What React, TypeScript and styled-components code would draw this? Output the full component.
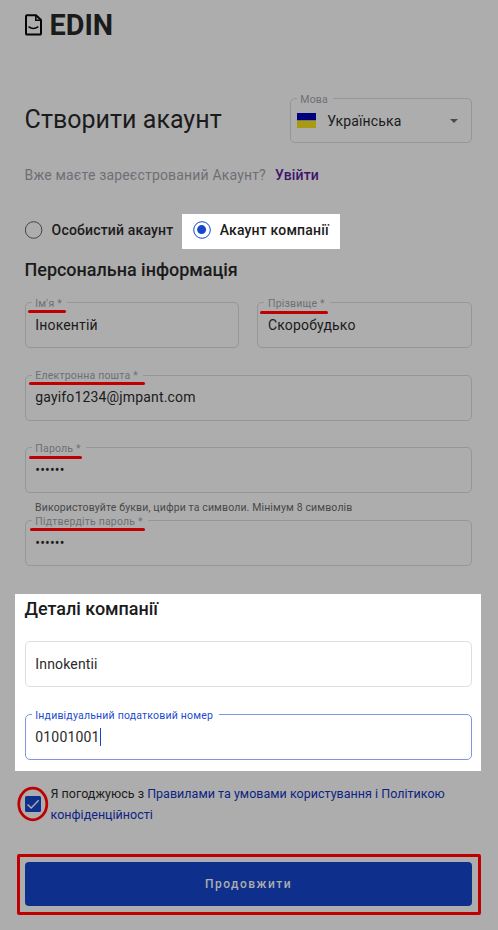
import React from 'react';
import styled, { createGlobalStyle } from 'styled-components';

const shade = '#adadad';
const red = '#c00000';

const GlobalStyle = createGlobalStyle`
  *, *::before, *::after { box-sizing: border-box; }
  body {
    margin: 0;
    background: ${shade};
    color: #1b1b1b;
    font-family: Roboto, "Liberation Sans", sans-serif;
    font-size: 14px;
  }
`;

const Page = styled.main`
  width: 498px;
  height: 930px;
  padding: 0 26px 0 25px;
  overflow: hidden;
  display: flex;
  flex-direction: column;
  background: ${shade};
`;

const Brand = styled.header`
  display: flex;
  align-items: center;
  gap: 7.5px;
  height: 50px;
  flex: none;
  svg { display: block; }
`;

const BrandName = styled.span`
  font-size: 28.8px;
  font-weight: 700;
  line-height: 50px;
`;

const TitleRow = styled.div`
  display: flex;
  justify-content: space-between;
  margin-top: 48px;
  height: 45px;
  flex: none;
`;

const Title = styled.h1`
  margin: 0 0 0 -0.4px;
  font-size: 25px;
  font-weight: 400;
  line-height: 44px;
  letter-spacing: 0.02px;
  white-space: nowrap;
`;

const Prompt = styled.p`
  margin: 22px 0 0 -0.4px;
  height: 20px;
  line-height: 20px;
  letter-spacing: 0.17px;
  color: #6c7075;
  white-space: nowrap;
  flex: none;
`;

const SignIn = styled.a`
  margin-left: 9px;
  color: #3e1269;
  font-weight: 500;
`;

const Radios = styled.div`
  display: flex;
  margin-top: 29px;
  height: 35px;
  flex: none;
`;

const RadioOption = styled.label<{ $active?: boolean }>`
  display: flex;
  align-items: center;
  gap: ${p => (p.$active ? 7.7 : 8.6)}px;
  width: ${p => (p.$active ? 158 : 157)}px;
  padding: 0 0 3px ${p => (p.$active ? 11 : 0)}px;
  background: ${p => (p.$active ? '#fff' : 'transparent')};
  font-weight: 500;
  letter-spacing: 0.18px;
  white-space: nowrap;
  svg { flex: none; display: block; }
`;

const SectionTitle = styled.h2<{ $top: number }>`
  margin: ${p => p.$top}px 0 0 -0.5px;
  height: 24px;
  font-size: 18px;
  font-weight: 500;
  line-height: 24px;
  letter-spacing: -0.02px;
  flex: none;
  white-space: nowrap;
`;

const Split = styled.div`
  display: grid;
  grid-template-columns: 214px 215px;
  column-gap: 18px;
  margin-top: 20px;
  flex: none;
`;

const Box = styled.div<{ $top?: number; $focus?: boolean; $light?: boolean; $inset?: number; $lift?: number }>`
  position: relative;
  display: flex;
  align-items: center;
  height: 46px;
  flex: none;
  margin-top: ${p => p.$top ?? 0}px;
  padding: 0 9px ${p => p.$lift ?? 0}px ${p => p.$inset ?? 9.3}px;
  border: 1px solid ${p => (p.$focus ? '#7b98dd' : p.$light ? '#dedede' : '#969696')};
  border-radius: 5px;
`;

const SelectBox = styled(Box)`
  width: 182px;
  height: 45px;
  padding: 0 13px 0 6px;
  svg { flex: none; display: block; }
`;

const Legend = styled.span<{ $focus?: boolean; $inset?: number; $lift?: number }>`
  position: absolute;
  top: ${p => (p.$lift ? -8 : -7)}px;
  left: 6px;
  padding: 0 5.5px 0 ${p => (p.$inset ?? 9.3) - 6}px;
  background: ${p => (p.$focus ? '#fff' : shade)};
  color: ${p => (p.$focus ? '#1c4bd0' : '#6c7075')};
  font-size: 10.5px;
  line-height: 15px;
  letter-spacing: 0.2px;
  white-space: nowrap;
`;

const Underline = styled.i<{ $left: number; $top: number; $width: number }>`
  position: absolute;
  left: ${p => p.$left}px;
  top: ${p => p.$top}px;
  width: ${p => p.$width}px;
  height: 3px;
  border-radius: 2px;
  background: ${red};
`;

const Value = styled.span<{ $light?: boolean }>`
  line-height: 20px;
  letter-spacing: 0.16px;
  color: ${p => (p.$light ? '#2a2a2a' : '#1b1b1b')};
  white-space: nowrap;
`;

const Language = styled(Value)`
  flex: 1;
  margin-left: 11.2px;
`;

const Caret = styled.i`
  width: 1px;
  height: 18px;
  background: #1546cc;
`;

const Hint = styled.p`
  margin: 7px 0 0 10.1px;
  height: 15px;
  font-size: 10.5px;
  line-height: 15px;
  letter-spacing: 0.13px;
  color: #484848;
  white-space: nowrap;
  flex: none;
`;

const Company = styled.section`
  margin: 28px -9px 0 -10px;
  padding: 3px 9px 0 10px;
  height: 177px;
  background: #fff;
  flex: none;
  display: flex;
  flex-direction: column;
`;

const Terms = styled.div`
  display: flex;
  margin: 12px -10px 0 -8px;
  height: 42px;
  flex: none;
  svg { display: block; flex: none; margin-top: 3px; }
`;

const TermsText = styled.p`
  margin: 0 0 0 1.5px;
  font-size: 12.5px;
  line-height: 21px;
  letter-spacing: 0.02px;
  white-space: nowrap;
  a { color: #0e2382; }
`;

const Outline = styled.div`
  margin: 29px -9px 0 -8px;
  height: 61px;
  padding: 5px 6px 8px 5px;
  border: 3px solid ${red};
  border-radius: 2px;
  flex: none;
`;

const Submit = styled.button`
  display: block;
  width: 447px;
  height: 44px;
  padding: 0;
  border: 0;
  border-radius: 4px;
  background: #0e308c;
  color: #adadad;
  font: 500 12px/44px Roboto, sans-serif;
  letter-spacing: 1.5px;
`;

type Mark = [left: number, top: number, width: number];

interface FieldProps {
  label?: string;
  value: string;
  top?: number;
  focus?: boolean;
  light?: boolean;
  mark?: Mark;
  inset?: number;
  lift?: number;
}

function Field({ label, value, top, focus, light, mark, inset, lift }: FieldProps) {
  return (
    <Box $top={top} $focus={focus} $light={light} $inset={inset} $lift={lift}>
      {label && <Legend $focus={focus} $inset={inset} $lift={lift}>{label}</Legend>}
      <Value $light={light || focus}>{value}</Value>
      {focus && <Caret />}
      {mark && <Underline $left={mark[0]} $top={mark[1]} $width={mark[2]} />}
    </Box>
  );
}

function Radio({ checked }: { checked?: boolean }) {
  return (
    <svg width={checked ? 19 : 18} height="18" viewBox={checked ? '0 0 19 18' : '0 0 18 18'}>
      <circle cx={checked ? 9 : 8.6} cy="9" r="8.3" fill="none" stroke={checked ? '#1546cc' : '#454545'} strokeWidth="1" />
      {checked && <circle cx="8.6" cy="8.6" r="4.5" fill="#1546cc" />}
    </svg>
  );
}

export default function App() {
  return (
    <>
      <GlobalStyle />
      <Page>
        <Brand>
          <svg width="17" height="22" viewBox="0 0 17 22">
            <path d="M2 1.2H11L16 6V19.4Q16 20.6 14.8 20.6H2.2Q1 20.6 1 19.4V2.2Q1 1.2 2 1.2Z" fill="none" stroke="#050505" strokeWidth="2" />
            <path d="M10.8 1.5V6.3H16" fill="none" stroke="#050505" strokeWidth="1.5" />
            <path d="M3.5 12.7Q8.3 16.3 13.3 12.7" fill="none" stroke="#050505" strokeWidth="1.5" />
          </svg>
          <BrandName>EDIN</BrandName>
        </Brand>
        <TitleRow>
          <Title>Створити акаунт</Title>
          <SelectBox>
            <Legend>Мова</Legend>
            <svg width="19" height="15" viewBox="0 0 19 15">
              <path d="M0 0H19V7.5H0Z" fill="#00007f" />
              <path d="M0 7.5H19V15H0Z" fill="#a99a13" />
            </svg>
            <Language>Українська</Language>
            <svg width="8" height="4" viewBox="0 0 8 4"><path d="M0 0H8L4 4Z" fill="#4b4b4b" /></svg>
          </SelectBox>
        </TitleRow>
        <Prompt>Вже маєте зареєстрований Акаунт?<SignIn>Увійти</SignIn></Prompt>
        <Radios>
          <RadioOption><Radio />Особистий акаунт</RadioOption>
          <RadioOption $active><Radio checked />Акаунт компанії</RadioOption>
        </Radios>
        <SectionTitle $top={9}>Персональна інформація</SectionTitle>
        <Split>
          <Field label="Ім'я *" value="Інокентій" mark={[2, 7, 38]} />
          <Field label="Прізвище *" value="Скоробудько" inset={10} mark={[2, 8, 68]} />
        </Split>
        <Field label="Електронна пошта *" value="gayifo1234@jmpant.com" top={27} lift={2} mark={[3, 6, 116]} />
        <Field label="Пароль *" value="••••••" top={26} mark={[3, 8, 53]} />
        <Hint>Використовуйте букви, цифри та символи. Мінімум 8 символів</Hint>
        <Field label="Підтвердіть пароль *" value="••••••" top={5} mark={[4, 7, 115]} />
        <Company>
          <SectionTitle $top={0}>Деталі компанії</SectionTitle>
          <Field value="Innokentii" top={20} light />
          <Field label="Індивідуальний податковий номер" value="01001001" top={27} focus />
        </Company>
        <Terms>
          <svg width="32" height="36" viewBox="0 0 32 36">
            <ellipse cx="15.8" cy="18" rx="14" ry="15.8" fill="none" stroke={red} strokeWidth="2.8" />
            <rect x="8" y="10" width="16" height="16" rx="1.5" fill="#0e308c" />
            <path d="M10.5 18.5L14.2 22L21.7 14.2" fill="none" stroke="#adadad" strokeWidth="1.4" />
          </svg>
          <TermsText>
            Я погоджуюсь з <a>Правилами та умовами користування і Політикою</a><br />
            <a>конфіденційності</a>
          </TermsText>
        </Terms>
        <Outline><Submit>Продовжити</Submit></Outline>
      </Page>
    </>
  );
}
